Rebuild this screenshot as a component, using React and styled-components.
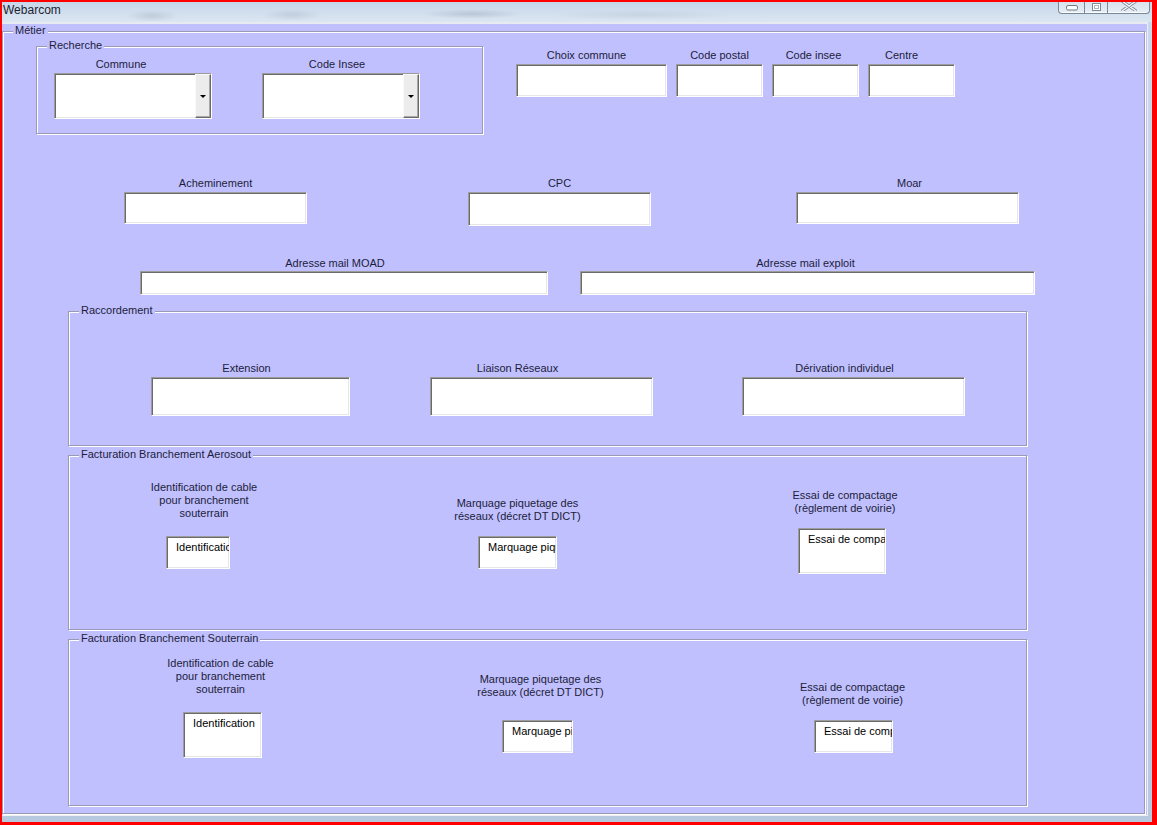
import React from 'react'
import styled, { createGlobalStyle } from 'styled-components'

const LAVENDER = '#c0c0ff'

const GlobalStyle = createGlobalStyle`
  html, body { margin: 0; padding: 0; background: #fff; }
  body { font-family: "Liberation Sans", Arial, sans-serif; }
`

// ---- data -------------------------------------------------------------

const topRight = [
  { label: 'Choix commune', w: 151, h: 33, ml: 33, mt: 2, shift: -5 },
  { label: 'Code postal', w: 87, h: 33, ml: 9, mt: 2 },
  { label: 'Code insee', w: 87, h: 33, ml: 9, mt: 2, shift: -2 },
  { label: 'Centre', w: 87, h: 33, ml: 9, mt: 2, shift: -10 },
]

const recherche = [
  { label: 'Commune', w: 158, h: 46, ml: 17, mt: 10, shift: -12, combo: true },
  { label: 'Code Insee', w: 158, h: 46, ml: 50, mt: 10, shift: -4, combo: true },
]

const rowB = [
  { label: 'Acheminement', w: 183, h: 32, ml: 121 },
  { label: 'CPC', w: 183, h: 34, ml: 161 },
  { label: 'Moar', w: 223, h: 32, ml: 145, shift: 2 },
]

const rowC = [
  { label: 'Adresse mail MOAD', w: 408, h: 24, ml: 137, gap: 2, shift: -9 },
  { label: 'Adresse mail exploit', w: 455, h: 24, ml: 32, gap: 2, shift: -2 },
]

const raccordement = [
  { label: 'Extension', w: 199, h: 39, ml: 82, mt: 49, shift: -4 },
  { label: 'Liaison Réseaux', w: 223, h: 39, ml: 80, mt: 49, shift: -24 },
  { label: 'Dérivation individuel', w: 223, h: 39, ml: 89, mt: 49, shift: -9 },
]

const IDENT = 'Identification de cable\npour branchement\nsouterrain'
const MARQ = 'Marquage piquetage des\nréseaux (décret DT DICT)'
const ESSAI = 'Essai de compactage\n(règlement de voirie)'

const aerosout = [
  { label: IDENT, w: 64, h: 33, ml: 97, mt: 24, gap: 17, shift: 6, value: 'Identification' },
  { label: MARQ, w: 79, h: 33, ml: 248, mt: 40, gap: 14, value: 'Marquage piquetage' },
  { label: ESSAI, w: 88, h: 46, ml: 241, mt: 32, gap: 14, shift: 3, value: 'Essai de compactage' },
]

const souterrain = [
  { label: IDENT, w: 79, h: 46, ml: 114, mt: 16, gap: 17, shift: -2, value: 'Identification' },
  { label: MARQ, w: 71, h: 33, ml: 240, mt: 32, gap: 22, shift: 3, value: 'Marquage piquetage' },
  { label: ESSAI, w: 79, h: 33, ml: 241, mt: 40, gap: 14, shift: -1, value: 'Essai de compactage' },
]

// ---- components -------------------------------------------------------

const Field = ({ label, w, h, ml = 0, mt = 0, gap = 3, shift = 0, value, combo }) => (
  <FieldCol $w={w} $ml={ml} $mt={mt}>
    <Caption $shift={shift}>{label}</Caption>
    <TextBox $h={h} $gap={gap - 1}>
      <BoxText>{value}</BoxText>
      {combo && (
        <DropButton>
          <Arrow />
        </DropButton>
      )}
    </TextBox>
  </FieldCol>
)

const Group = ({ title, children, ...rest }) => (
  <Frame {...rest}>
    <Legend>{title}</Legend>
    {children}
  </Frame>
)

const Fields = ({ list }) => list.map((f, i) => <Field key={i} {...f} />)

const App = () => {
  return (
    <>
      <GlobalStyle />
      <Window>
        <TitleBar>
          <Title>Webarcom</Title>
          <Controls>
            <CtrlButton $w={27} $first>
              <svg width="12" height="6" viewBox="0 0 12 6">
                <rect x="0.5" y="0.5" width="11" height="4.5" rx="1.5" fill="#fff" stroke="#6f7a8a" />
              </svg>
            </CtrlButton>
            <CtrlButton $w={23}>
              <svg width="9" height="8" viewBox="0 0 9 8">
                <rect x="0.5" y="0.5" width="8" height="7" fill="#fff" stroke="#7d8898" />
                <rect x="2.5" y="2.5" width="4" height="3" fill="none" stroke="#aab3c0" />
              </svg>
            </CtrlButton>
            <CtrlButton $w={42} $last>
              <svg width="16" height="10" viewBox="0 0 16 10">
                <path d="M1 0 L15 10 M15 0 L1 10" stroke="#7c8696" strokeWidth="3" strokeLinecap="round" />
                <path d="M1 0 L15 10 M15 0 L1 10" stroke="#f4f6f9" strokeWidth="1.4" strokeLinecap="round" />
              </svg>
            </CtrlButton>
          </Controls>
        </TitleBar>

        <Client>
          <Group title="Métier" $grow $column>
            <Row $mt={14} $h={88}>
              <Group title="Recherche" $w={447} $h={88} $ml={33}>
                <Fields list={recherche} />
              </Group>
              <Fields list={topRight} />
            </Row>

            <Row $mt={42} $h={50}>
              <Fields list={rowB} />
            </Row>

            <Row $mt={30} $h={40}>
              <Fields list={rowC} />
            </Row>

            <Group title="Raccordement" $w={959} $h={135} $ml={65} $mt={15}>
              <Fields list={raccordement} />
            </Group>

            <Group title="Facturation Branchement Aerosout" $w={959} $h={175} $ml={65} $mt={9}>
              <Fields list={aerosout} />
            </Group>

            <Group title="Facturation Branchement Souterrain" $w={959} $h={167} $ml={65} $mt={9}>
              <Fields list={souterrain} />
            </Group>
          </Group>
        </Client>
      </Window>
    </>
  )
}

export default App

// ---- styles -----------------------------------------------------------

const Window = styled.div`
  width: 1157px;
  height: 825px;
  box-sizing: border-box;
  border: solid #ff0000;
  border-width: 2px 5px 3px 2px;
  background: linear-gradient(to bottom, #c9d8ea, #b6c9de);
  display: flex;
  flex-direction: column;
  overflow: hidden;
`

const TitleBar = styled.div`
  height: 20px;
  flex: none;
  display: flex;
  align-items: flex-start;
  background:
    radial-gradient(ellipse 26px 6px at 150px 14px, rgba(80, 92, 112, 0.16), transparent),
    radial-gradient(ellipse 30px 6px at 290px 13px, rgba(80, 92, 112, 0.14), transparent),
    radial-gradient(ellipse 50px 5px at 470px 12px, rgba(70, 82, 104, 0.18), transparent),
    radial-gradient(ellipse 90px 5px at 640px 13px, rgba(90, 100, 120, 0.1), transparent),
    linear-gradient(to bottom, #c6d6e9, #dbe6f1);
`

const Title = styled.span`
  font: 12px/14px "Liberation Sans", Arial, sans-serif;
  color: #1c2330;
  padding: 1px 0 0 1px;
`

const Controls = styled.div`
  margin-left: auto;
  margin-right: 2px;
  display: flex;
  height: 12px;
`

const CtrlButton = styled.div`
  width: ${p => p.$w}px;
  height: 12px;
  box-sizing: border-box;
  display: flex;
  align-items: flex-end;
  justify-content: center;
  padding-bottom: 2px;
  border: 1px solid #7b8698;
  border-top: none;
  border-left-width: ${p => (p.$first ? 1 : 0)}px;
  border-bottom-left-radius: ${p => (p.$first ? 4 : 0)}px;
  border-bottom-right-radius: ${p => (p.$last ? 4 : 0)}px;
  background: linear-gradient(to bottom, #d9e3ee, #e6edf5);
  box-shadow: inset 0 -1px 0 rgba(255, 255, 255, 0.8);

  svg { display: block; }
`

const Client = styled.div`
  flex: 1;
  display: flex;
  margin: 0 4px 6px 0;
  padding: 7px 2px 1px 0;
  background: ${LAVENDER};
  border-top: 2px solid #e8eaf1;
  border-right: 1px solid #eef0f6;
  border-bottom: 1px solid #eef0f6;
`

const Frame = styled.div`
  position: relative;
  box-sizing: border-box;
  flex: ${p => (p.$grow ? 1 : 'none')};
  width: ${p => (p.$w ? `${p.$w}px` : 'auto')};
  height: ${p => (p.$h ? `${p.$h}px` : 'auto')};
  margin: ${p => `${p.$mt || 0}px 0 0 ${p.$ml || 0}px`};
  display: flex;
  flex-direction: ${p => (p.$column ? 'column' : 'row')};
  align-items: flex-start;
  border: 1px solid #9a9ab6;
  box-shadow: inset 1px 1px 0 #ffffff, 1px 1px 0 #ffffff;
`

const Legend = styled.span`
  position: absolute;
  top: -8px;
  left: 10px;
  padding: 0 2px;
  background: ${LAVENDER};
  font-size: 11px;
  line-height: 13px;
  color: #1d1d3a;
  white-space: nowrap;
`

const Row = styled.div`
  flex: none;
  display: flex;
  align-items: flex-start;
  height: ${p => p.$h}px;
  margin-top: ${p => p.$mt}px;
`

const FieldCol = styled.div`
  flex: none;
  width: ${p => p.$w}px;
  margin: ${p => `${p.$mt}px 0 0 ${p.$ml}px`};
  display: flex;
  flex-direction: column;
  align-items: center;
`

const Caption = styled.div`
  padding-top: 1px;
  font-size: 11px;
  line-height: 13px;
  color: #1d1d3a;
  white-space: pre;
  text-align: center;
  margin-left: ${p => p.$shift * 2}px;
`

const TextBox = styled.div`
  align-self: stretch;
  box-sizing: border-box;
  height: ${p => p.$h}px;
  margin-top: ${p => p.$gap}px;
  display: flex;
  overflow: hidden;
  background: #ffffff;
  border: 1px solid;
  border-color: #9c9c9c #ffffff #ffffff #9c9c9c;
  box-shadow: inset 1px 1px 0 #6b6b6b, inset -1px -1px 0 #e6e6e6;
`

const BoxText = styled.div`
  flex: 1;
  min-width: 0;
  overflow: hidden;
  padding: 4px 0 0 9px;
  font-size: 11px;
  line-height: 13px;
  color: #000;
  white-space: nowrap;
`

const DropButton = styled.div`
  flex: none;
  width: 16px;
  box-sizing: border-box;
  display: flex;
  align-items: center;
  justify-content: center;
  background: #ececec;
  border: 1px solid;
  border-color: #fafafa #6a6a6a #6a6a6a #fafafa;
  box-shadow: inset -1px -1px 0 #a8a8a8;
`

const Arrow = styled.span`
  width: 0;
  height: 0;
  border-left: 3px solid transparent;
  border-right: 3px solid transparent;
  border-top: 3px solid #000;
`
